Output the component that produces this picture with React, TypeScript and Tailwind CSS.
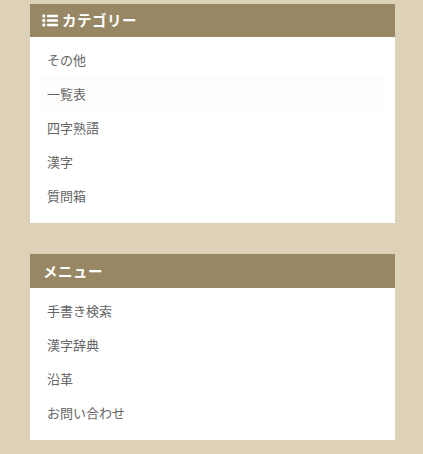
import React from "react";

const categories = ["その他", "一覧表", "四字熟語", "漢字", "質問箱"];
const menus = ["手書き検索", "漢字辞典", "沿革", "お問い合わせ"];

function ListIcon() {
  return (
    <svg width="16" height="13" viewBox="0 0 16 13" className="mr-[4px] ml-[-1px] shrink-0" fill="#ffffff">
      <circle cx="1.8" cy="2" r="1.7" />
      <circle cx="1.8" cy="6.5" r="1.7" />
      <circle cx="1.8" cy="11" r="1.7" />
      <rect x="5" y="0.8" width="11" height="2.4" rx="0.5" />
      <rect x="5" y="5.3" width="11" height="2.4" rx="0.5" />
      <rect x="5" y="9.8" width="11" height="2.4" rx="0.5" />
    </svg>
  );
}

function Panel({ title, items, icon, hovered }: { title: string; items: string[]; icon?: boolean; hovered?: number }) {
  return (
    <section className="bg-white">
      <h2 className="flex h-[33.5px] items-center bg-[#978765] px-[13px] text-[14.5px] font-bold tracking-[0.5px] text-white">
        {icon && <ListIcon />}
        {title}
      </h2>
      <ul className="px-[10px] pb-[10px] pt-[6px]">
        {items.map((item, i) => (
          <li
            key={item}
            className={`flex h-[34px] items-center pl-[7px] text-[13px] text-[#666666] ${i === hovered ? "bg-[#fdfdfd]" : ""}`}
          >
            {item}
          </li>
        ))}
      </ul>
    </section>
  );
}

export default function App() {
  return (
    <div
      className="h-[454px] overflow-hidden bg-[#ddd1b7] pl-[30px] pr-[28px] pt-[3.6px]"
      style={{ fontFamily: '"Noto Sans CJK JP", "Liberation Sans", sans-serif' }}
    >
      <div className="flex flex-col gap-[31px]">
        <Panel title="カテゴリー" items={categories} icon hovered={1} />
        <Panel title="メニュー" items={menus} />
      </div>
    </div>
  );
}
